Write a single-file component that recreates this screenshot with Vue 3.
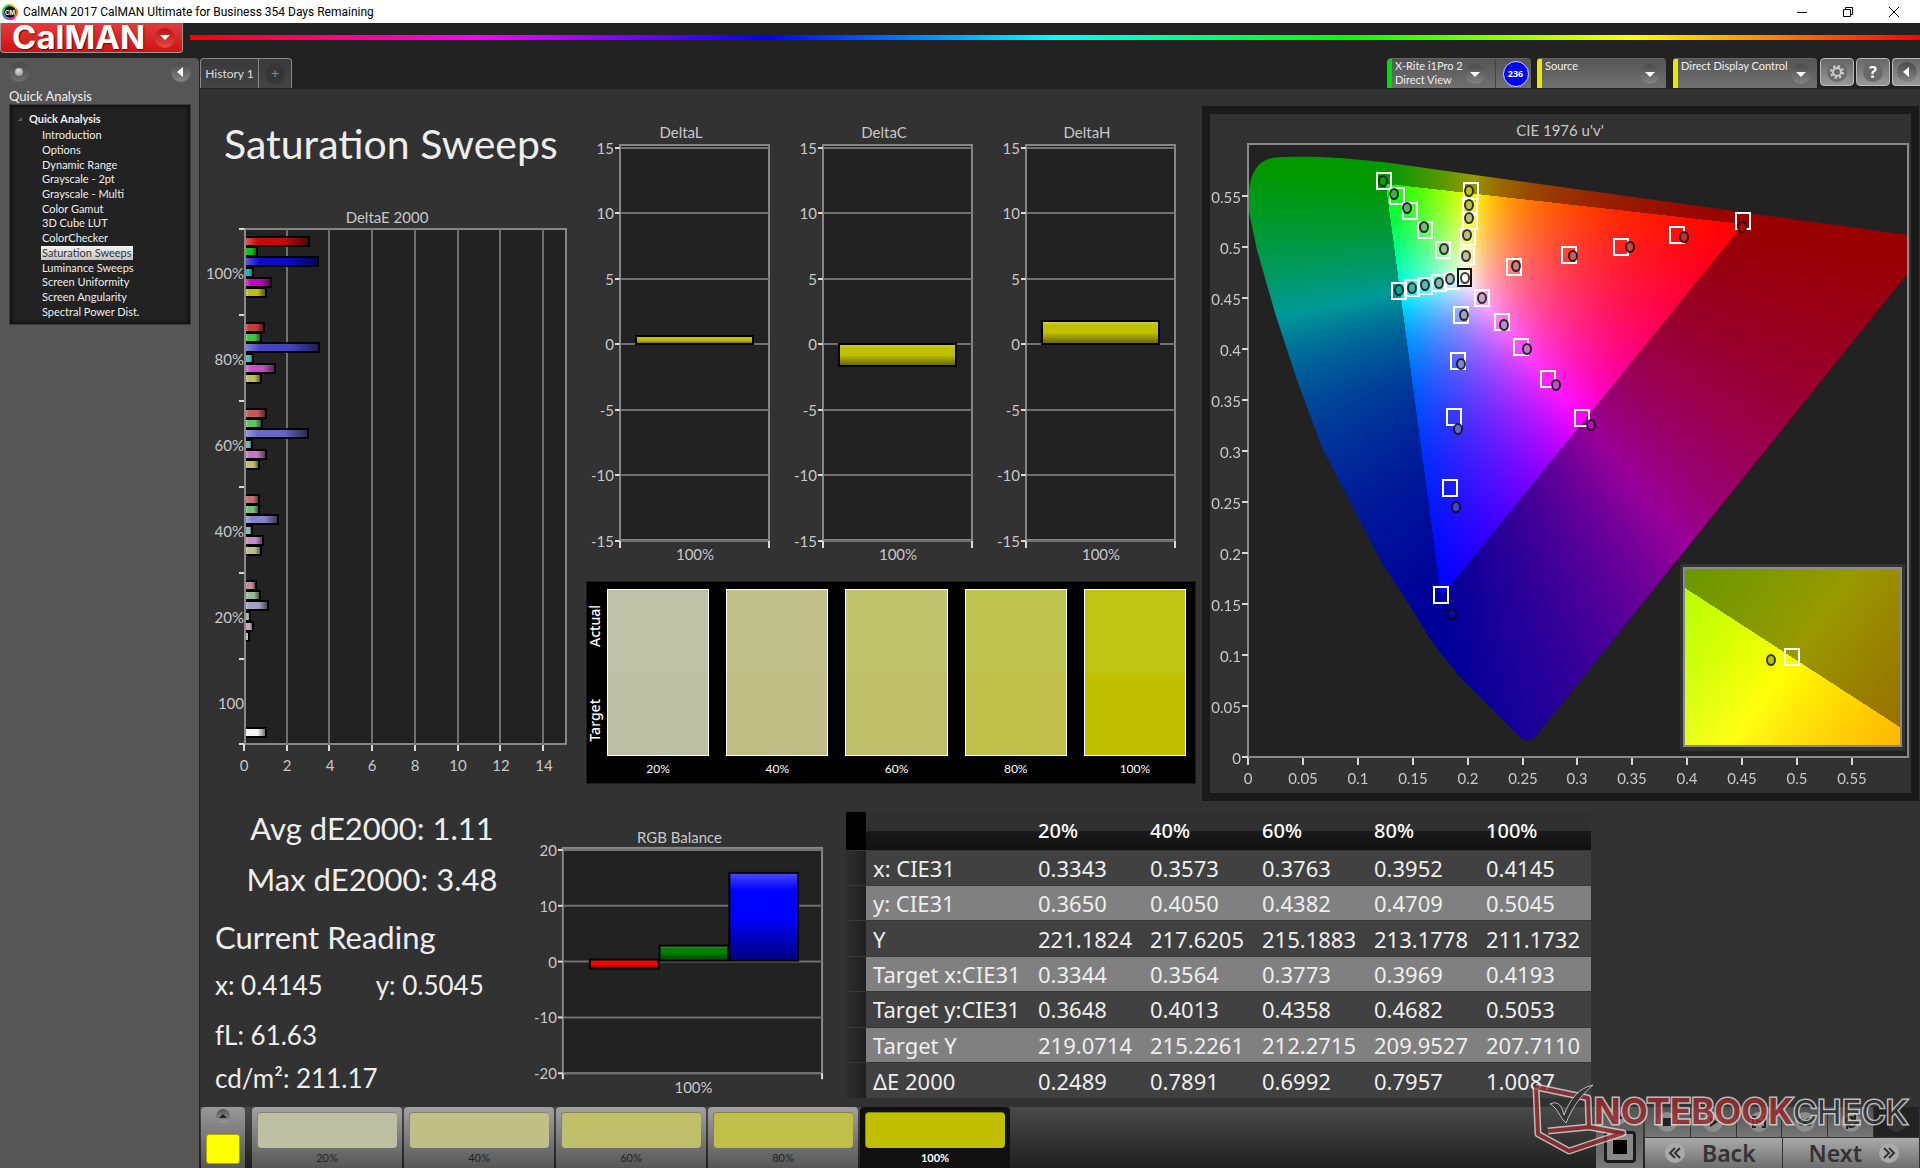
<script setup>
import { onMounted, ref } from 'vue'

const steps = [
  'Introduction', 'Options', 'Dynamic Range', 'Grayscale - 2pt', 'Grayscale - Multi',
  'Color Gamut', '3D Cube LUT', 'ColorChecker', 'Saturation Sweeps', 'Luminance Sweeps',
  'Screen Uniformity', 'Screen Angularity', 'Spectral Power Dist.',
]

/* DeltaE 2000 per saturation level: red, green, blue, cyan, magenta, yellow */
const deltaE = [
  { label: '100%', values: [64, 12, 73, 8, 26, 21], colors: ['#c80a0a', '#0fc00f', '#0a0ac8', '#10bcbc', '#bc08bc', '#bebe10'] },
  { label: '80%', values: [19, 16, 74, 8, 30, 16], colors: ['#c43c3c', '#42c442', '#4646c2', '#50bcbc', '#c450c4', '#bebe50'] },
  { label: '60%', values: [21, 17, 63, 7, 21, 14], colors: ['#c45858', '#60c460', '#6868c6', '#70bcbc', '#c478c4', '#bebe70'] },
  { label: '40%', values: [14, 14, 33, 7, 18, 16], colors: ['#c47070', '#78be78', '#8484c8', '#88bcbc', '#c48cc4', '#bebe84'] },
  { label: '20%', values: [11, 15, 23, 5, 8, 4], colors: ['#c49090', '#98be98', '#a0a0c4', '#a0bcbc', '#c0a8c4', '#c4c4aa'] },
  { label: '100', values: [0, 0, 0, 0, 0, 0, 21], colors: ['', '', '', '', '', '', '#f4f4f4'] },
]
const deTop = (g, i) => 28 + g * 86 + Math.round(i * 10.2)

const deltas = [
  { name: 'DeltaL', top: 212, height: 8 },
  { name: 'DeltaC', top: 220, height: 22 },
  { name: 'DeltaH', top: 197, height: 23 },
]
const deltaTicks = [15, 10, 5, 0, -5, -10, -15]
const deltaY = (v) => Math.round(220 - v * 13.1)

const rgbTicks = [20, 10, 0, -10, -20]
const rgbBars = [
  { x: 71, y: 131, h: 9, color: '#ff0000' },
  { x: 141, y: 117, h: 15, color: '#008000' },
  { x: 211, y: 44, h: 88, color: '#0000ff' },
]

const patches = [
  { label: '20%', actual: '#c0c0a6', target: '#bfbfa4' },
  { label: '40%', actual: '#c1c18a', target: '#c0c086' },
  { label: '60%', actual: '#c0c46c', target: '#c0bf6a' },
  { label: '80%', actual: '#bfc44e', target: '#bfc04a' },
  { label: '100%', actual: '#c0c414', target: '#c0c000' },
]

const rows = [
  ['x: CIE31', '0.3343', '0.3573', '0.3763', '0.3952', '0.4145'],
  ['y: CIE31', '0.3650', '0.4050', '0.4382', '0.4709', '0.5045'],
  ['Y', '221.1824', '217.6205', '215.1883', '213.1778', '211.1732'],
  ['Target x:CIE31', '0.3344', '0.3564', '0.3773', '0.3969', '0.4193'],
  ['Target y:CIE31', '0.3648', '0.4013', '0.4358', '0.4682', '0.5053'],
  ['Target Y', '219.0714', '215.2261', '212.2715', '209.9527', '207.7110'],
  ['ΔE 2000', '0.2489', '0.7891', '0.6992', '0.7957', '1.0087'],
]

/* CIE 1976 diagram: plot box is 660 x 613, drawn at (38, 30) in its SVG */
const cieX = [0, 0.05, 0.1, 0.15, 0.2, 0.25, 0.3, 0.35, 0.4, 0.45, 0.5, 0.55]
const PX = 38
const PY = 643
const SU = 1098
const SV = 1020
const ux = (u) => Math.round(PX + u * SU)
const vy = (v) => Math.round(PY - v * SV)

/* target x, target y, measured x, measured y, fill */
const marks = [
  [174, 67, 173, 67, '#00a800'], [187, 82, 184, 80, '#40b040'], [200, 97, 197, 94, '#60b460'], [215, 116, 214, 113, '#78bc78'], [233, 136, 234, 135, '#98bc98'],
  [261, 77, 259, 77, '#bebe10'], [260, 93, 259, 91, '#bebe50'], [260, 107, 259, 104, '#bebe70'], [258, 123, 257, 121, '#bebe84'], [257, 142, 256, 142, '#c0c0a6'],
  [189, 177, 189, 176, '#00a8a8'], [202, 174, 202, 174, '#40b0b0'], [215, 172, 215, 171, '#68b4b4'], [229, 169, 229, 169, '#84b8b8'], [242, 167, 240, 165, '#a0bcbc'],
  [304, 153, 306, 152, '#c08080'], [359, 141, 363, 142, '#c06060'], [411, 133, 420, 133, '#c04848'], [467, 121, 474, 123, '#c03030'], [533, 107, 532, 113, '#c00000'],
  [272, 184, 272, 184, '#c0a8c4'], [292, 208, 294, 211, '#c08cc4'], [311, 233, 317, 235, '#c078c4'], [338, 265, 346, 271, '#c050c4'], [372, 304, 381, 311, '#bc08bc'],
  [251, 201, 254, 201, '#a0a0c4'], [248, 247, 251, 250, '#8484c8'], [244, 303, 248, 315, '#6868c6'], [240, 374, 246, 393, '#4646c2'], [231, 481, 242, 500, '#0a0aa8'],
]

const locus = ref(null)
const detail = ref(null)

/* xy chromaticity -> linear RGB, brightest channel at full; dimmed outside the gamut */
function shade(x, y) {
  const X = x / y
  const Z = (1 - x - y) / y
  const lin = [
    3.2406 * X - 1.5372 - 0.4986 * Z,
    -0.9689 * X + 1.8758 + 0.0415 * Z,
    0.0557 * X - 0.204 + 1.057 * Z,
  ]
  const dim = Math.min(...lin) < 0 ? 0.6 : 1
  const max = Math.max(...lin)
  return lin.map((c) => (255 * dim * Math.max(c, 0)) / max)
}

function paint(canvas, toXY) {
  const { width, height } = canvas
  const ctx = canvas.getContext('2d')
  const img = ctx.createImageData(width, height)
  for (let j = 0; j < height; j++) {
    for (let i = 0; i < width; i++) {
      const [x, y] = toXY(i, j)
      const c = shade(x, y)
      const k = 4 * (j * width + i)
      img.data[k] = c[0]
      img.data[k + 1] = c[1]
      img.data[k + 2] = c[2]
      img.data[k + 3] = 255
    }
  }
  ctx.putImageData(img, 0, 0)
}

onMounted(() => {
  paint(locus.value, (i, j) => {
    const u = i / SU
    const v = Math.max((613 - j) / SV, 0.001)
    const d = 6 * u - 16 * v + 12
    return [(9 * u) / d, (4 * v) / d]
  })
  paint(detail.value, (i, j) => [0.3943 + (i / 216) * 0.05, 0.5303 - (j / 176) * 0.05])
})
</script>

<template>
  <div class="app">
    <header class="titlebar">
      <svg class="appicon" viewBox="0 0 16 16" aria-hidden="true">
        <path d="M8 1A7 7 0 0 1 14 5" stroke="#f3d21b" />
        <path d="M14 5A7 7 0 0 1 13 13" stroke="#f26a1b" />
        <path d="M13 13A7 7 0 0 1 6 15" stroke="#e01bd0" />
        <path d="M6 15A7 7 0 0 1 1 9" stroke="#3a5cf0" />
        <path d="M1 9A7 7 0 0 1 8 1" stroke="#25d35a" />
        <circle cx="8" cy="8" r="6" fill="#111" stroke="none" />
        <text x="8" y="11">CM</text>
      </svg>
      <span class="caption">CalMAN 2017 CalMAN Ultimate for Business 354 Days Remaining</span>
      <div class="winbtns">
        <button aria-label="Minimize"><svg viewBox="0 0 10 10"><path d="M0 5.5H10" /></svg></button>
        <button aria-label="Restore"><svg viewBox="0 0 10 10"><path d="M.5 2.5H7.5V9.5H.5ZM2.5 2.5V.5H9.5V7.5H7.5" /></svg></button>
        <button aria-label="Close"><svg viewBox="0 0 10 10"><path d="M0 0L10 10M10 0L0 10" /></svg></button>
      </div>
    </header>

    <div class="brandrow">
      <button class="brand">CalMAN<span class="knob red"><i class="down"></i></span></button>
      <div class="rainbow"></div>
    </div>

    <div class="body">
      <aside class="side">
        <div class="sidetop">
          <span class="knob flat"><i class="dot"></i></span>
          <button class="knob" aria-label="Collapse"><i class="left"></i></button>
        </div>
        <h2>Quick Analysis</h2>
        <nav class="tree">
          <div class="root"><i class="fold"></i>Quick Analysis</div>
          <ul>
            <li v-for="s in steps" :key="s">
              <a href="#" :class="{ on: s === 'Saturation Sweeps' }">{{ s }}</a>
            </li>
          </ul>
        </nav>
      </aside>

      <main class="main">
        <div class="toolbar">
          <div class="tabs">
            <button class="tab">History 1</button>
            <button class="tab add" aria-label="Add history"><span>+</span></button>
          </div>
          <div class="devices">
            <div class="device meter">
              <button class="devbtn green"><span>X-Rite i1Pro 2<br />Direct View</span><span class="knob"><i class="down"></i></span></button>
              <div class="count"><span>236</span></div>
            </div>
            <button class="device devbtn source"><span>Source</span><span class="knob"><i class="down"></i></span></button>
            <button class="device devbtn display"><span>Direct Display Control</span><span class="knob"><i class="down"></i></span></button>
            <button class="sq" aria-label="Settings">
              <svg viewBox="0 0 22 22">
                <circle cx="11" cy="11" r="10" class="disc" />
                <circle cx="11" cy="11" r="4" fill="none" stroke="#ccc" stroke-width="2" />
                <circle cx="11" cy="11" r="6" fill="none" stroke="#ccc" stroke-width="2" stroke-dasharray="2.4 2.3" />
              </svg>
            </button>
            <button class="sq help" aria-label="Help"><span>?</span></button>
            <button class="sq cut" aria-label="Expand"><span class="knob"><i class="left"></i></span></button>
          </div>
        </div>

        <div class="page">
          <div class="upper">
            <section class="sweeps">
              <h1>Saturation Sweeps</h1>
              <svg viewBox="0 0 380 566" class="chart">
                <defs>
                  <linearGradient id="glossH">
                    <stop offset="0" stop-color="#fff" stop-opacity=".35" />
                    <stop offset=".2" stop-color="#fff" stop-opacity="0" />
                    <stop offset=".6" stop-color="#000" stop-opacity="0" />
                    <stop offset="1" stop-color="#000" stop-opacity=".6" />
                  </linearGradient>
                </defs>
                <text x="187" y="14" class="mid">DeltaE 2000</text>
                <rect x="45" y="20" width="321" height="515" class="plot" />
                <path v-for="n in 7" :key="n" :d="`M${44 + Math.round(n * 42.7)} 20V541`" class="grid" />
                <path v-for="n in 7" :key="'t' + n" :d="`M39 ${20 + Math.round((n - 1) * 85.9)}h6`" class="tick" />
                <path v-for="n in 8" :key="'b' + n" :d="`M${44 + Math.round((n - 1) * 42.7)} 536v6`" class="tick" />
                <text v-for="n in 8" :key="'x' + n" :x="44 + Math.round((n - 1) * 42.8)" y="562" class="mid">{{ (n - 1) * 2 }}</text>
                <g v-for="(g, gi) in deltaE" :key="gi">
                  <text x="44" :y="70 + gi * 86" class="end">{{ g.label }}</text>
                  <template v-for="(w, i) in g.values" :key="i">
                    <g v-if="w">
                      <rect x="45" :y="deTop(gi, i)" :width="w" height="9" :fill="g.colors[i]" />
                      <rect x="45" :y="deTop(gi, i)" :width="w" height="9" fill="url(#glossH)" stroke="#000" stroke-width="2" />
                    </g>
                  </template>
                </g>
                <path d="M45 20V535" class="frame" />
              </svg>
            </section>

            <section class="middle">
              <div class="deltas">
                <svg v-for="d in deltas" :key="d.name" viewBox="0 0 203 440" class="chart">
                  <defs>
                    <linearGradient id="glossV" x2="0" y2="1">
                      <stop offset="0" stop-color="#fff" stop-opacity=".3" />
                      <stop offset=".2" stop-color="#fff" stop-opacity="0" />
                      <stop offset=".5" stop-color="#000" stop-opacity="0" />
                      <stop offset="1" stop-color="#000" stop-opacity=".5" />
                    </linearGradient>
                  </defs>
                  <text x="101" y="14" class="mid">{{ d.name }}</text>
                  <rect x="40" y="21" width="149" height="395" class="plot" />
                  <g v-for="t in deltaTicks" :key="t">
                    <path :d="`M40 ${deltaY(t)}H189`" class="grid" />
                    <path :d="`M35 ${deltaY(t)}h5`" class="tick" />
                    <text x="34" :y="deltaY(t) + 6" class="end">{{ t }}</text>
                  </g>
                  <path d="M40 417v7M189 417v7" class="tick" />
                  <rect x="56" :y="d.top" width="117" :height="d.height" fill="#c0c000" />
                  <rect x="56" :y="d.top" width="117" :height="d.height" fill="url(#glossV)" stroke="#000" stroke-width="2" />
                  <text x="115" y="436" class="mid">100%</text>
                </svg>
              </div>
              <div class="compare">
                <div class="vert"><span>Actual</span><span>Target</span></div>
                <figure v-for="p in patches" :key="p.label">
                  <div class="patch">
                    <div :style="{ background: p.actual }"></div>
                    <div :style="{ background: p.target }"></div>
                  </div>
                  <figcaption>{{ p.label }}</figcaption>
                </figure>
              </div>
            </section>

            <section class="cie">
              <svg viewBox="0 0 701 679" class="chart">
                <text x="350" y="22" class="mid">CIE 1976 u'v'</text>
                <rect x="38" y="30" width="660" height="613" class="plot" />
                <foreignObject x="38" y="30" width="660" height="613">
                  <canvas ref="locus" class="locus" width="660" height="613"></canvas>
                </foreignObject>
                <rect x="38" y="30" width="660" height="613" class="frame" />
                <g v-for="t in cieX" :key="t">
                  <path :d="`M32 ${vy(t)}h6M${ux(t)} 644v7`" class="tick" />
                  <text x="31" :y="vy(t) + 7" class="end">{{ t }}</text>
                  <text :x="ux(t)" y="670" class="mid">{{ t }}</text>
                </g>
                <g v-for="(m, i) in marks" :key="'s' + i">
                  <rect :x="m[0] - 7" :y="m[1] - 8" width="14" height="16" class="target" />
                </g>
                <rect x="248" y="155" width="13" height="17" class="white" />
                <g v-for="(m, i) in marks" :key="'c' + i">
                  <ellipse :cx="m[2]" :cy="m[3]" rx="4" ry="5" :fill="m[4]" class="dotm" />
                </g>
                <ellipse cx="255" cy="164" rx="4" ry="5" fill="#fff" class="dotm" />
                <rect x="470" y="450" width="225" height="187" fill="#333" />
                <foreignObject x="474" y="455" width="216" height="176">
                  <canvas ref="detail" width="216" height="176"></canvas>
                </foreignObject>
                <rect x="474" y="454" width="217" height="178" class="frame" />
                <rect x="575" y="535" width="14" height="16" class="target" />
                <ellipse cx="561" cy="546" rx="4" ry="5" fill="#bebe10" class="dotm" />
              </svg>
            </section>
          </div>

          <div class="lower">
            <section class="stats">
              <p class="big c">Avg dE2000: 1.11</p>
              <p class="big c">Max dE2000: 3.48</p>
              <p class="big head">Current Reading</p>
              <p class="xy"><span>x: 0.4145</span><span>y: 0.5045</span></p>
              <p class="fl">fL: 61.63</p>
              <p class="cd">cd/m²: 211.17</p>
            </section>
            <section class="rgb">
              <svg viewBox="0 0 328 272" class="chart">
                <text x="161" y="14" class="mid">RGB Balance</text>
                <rect x="44" y="19" width="260" height="226" class="plot" />
                <g v-for="t in rgbTicks" :key="t">
                  <path :d="`M44 ${Math.round(133 - t * 5.6)}H304`" class="grid" />
                  <path :d="`M39 ${Math.round(133 - t * 5.6)}h5`" class="tick" />
                  <text x="38" :y="Math.round(133 - t * 5.6) + 6" class="end">{{ t }}</text>
                </g>
                <path d="M44 245v6M304 245v6" class="tick" />
                <g v-for="b in rgbBars" :key="b.x">
                  <rect :x="b.x" :y="b.y" width="69" :height="b.h" :fill="b.color" />
                  <rect :x="b.x" :y="b.y" width="69" :height="b.h" fill="url(#glossV)" stroke="#000" stroke-width="2" />
                </g>
                <text x="175" y="265" class="mid">100%</text>
              </svg>
            </section>
            <section class="data">
              <table>
                <thead>
                  <tr><th class="grip"></th><th></th><th v-for="p in patches" :key="p.label" scope="col">{{ p.label }}</th></tr>
                </thead>
                <tbody>
                  <tr v-for="r in rows" :key="r[0]">
                    <td class="grip"></td>
                    <td v-for="(c, i) in r" :key="i">{{ c }}</td>
                  </tr>
                </tbody>
              </table>
            </section>
          </div>
        </div>

        <footer class="dock">
          <button class="current" aria-label="Current color"><span class="knob tiny"><i class="up"></i></span><span class="chip"></span></button>
          <button v-for="p in patches" :key="p.label" class="level" :class="{ on: p.label === '100%' }">
            <span class="bar" :style="{ background: p.target }"></span>{{ p.label }}
          </button>
          <div class="controls">
            <button class="view" aria-label="View"><span class="knob tiny"><i class="up"></i></span><span class="screen"></span></button>
            <div class="nav">
              <div class="mini">
                <button aria-label="Stop"><svg viewBox="0 0 20 20"><circle cx="10" cy="10" r="10" /><path d="M6 6h8v8H6z" /></svg></button>
                <button aria-label="Play"><svg viewBox="0 0 20 20"><circle cx="10" cy="10" r="10" /><path d="M7 5l8 5-8 5z" /></svg></button>
                <button aria-label="Read series"><svg viewBox="0 0 20 20"><circle cx="10" cy="10" r="10" /><path d="M7 5H4v10h3M13 5h3v10h-3M8 8l4 2-4 2z" class="ln" /></svg></button>
                <button aria-label="Continuous"><svg viewBox="0 0 20 20"><circle cx="10" cy="10" r="10" /><path d="M10 10C7 5 3 7 4 10s4 4 6 0 6-3 6 0-3 5-6 0" class="ln" /></svg></button>
                <button aria-label="Refresh"><svg viewBox="0 0 20 20"><circle cx="10" cy="10" r="10" /><path d="M5 10a5 5 0 0 1 9-3M15 10a5 5 0 0 1-9 3M14 3v4h-4M6 17v-4h4" class="ln" /></svg></button>
                <button class="off" aria-label="More"><svg viewBox="0 0 20 20"><circle cx="10" cy="10" r="10" /></svg></button>
              </div>
              <div class="steps">
                <button>
                  <svg class="chev" viewBox="0 0 20 20"><circle cx="10" cy="10" r="10" /><path d="M10 5L5 10L10 15M15 5L10 10L15 15" /></svg>Back
                </button>
                <button class="next">
                  Next<svg class="chev" viewBox="0 0 20 20"><circle cx="10" cy="10" r="10" /><path d="M5 5L10 10L5 15M10 5L15 10L10 15" /></svg>
                </button>
              </div>
            </div>
            <svg class="mark" viewBox="0 0 388 76" role="img" aria-label="Notebookcheck">
              <path class="lap" d="M5 7L57 18L58 47L17 51M5 7L7 54L38 71L92 53L58 47" />
              <path class="lapred" d="M5 7L57 18L58 47L17 51M5 7L7 54L38 71L92 53L58 47" />
              <path class="check" d="M19 24C28 20 31 27 33 35C39 19 48 8 62 5C50 15 41 28 35 43C29 38 27 28 19 24Z" />
              <text x="63" y="44" class="nb">NOTEBOOK</text>
              <text x="262" y="44" class="ck">CHECK</text>
            </svg>
          </div>
        </footer>
      </main>
    </div>
  </div>
</template>

<style>
body { background: #222; }
</style>

<style scoped>
* { box-sizing: border-box; }
.app { font-family: Lato, "Noto Sans", sans-serif; color: #eee; background: #222; min-height: 100vh; display: flex; flex-direction: column; overflow: hidden; }
button { font: inherit; color: inherit; border: 0; padding: 0; margin: 0; background: none; }
h1, h2, p, ul, figure { margin: 0; padding: 0; font-weight: 400; }

.titlebar { height: 23px; background: #fff; color: #000; display: flex; align-items: center; font: 12px/22px Roboto, "Noto Sans", sans-serif; padding: 0 3px 0 2px; }
.appicon { width: 16px; height: 16px; margin-right: 5px; fill: none; stroke-width: 2; }
.appicon text { fill: #fff; font: 700 6px Inter, sans-serif; text-anchor: middle; }
.caption { flex: 1; white-space: nowrap; }
.winbtns { display: flex; }
.winbtns button { width: 46px; height: 22px; display: grid; place-items: center; }
.winbtns svg { width: 10px; height: 10px; fill: none; stroke: #000; }

.brandrow { height: 35px; display: flex; align-items: flex-start; }
.brand { width: 183px; height: 30px; flex: none; display: flex; align-items: center; justify-content: space-between; padding: 0 7px 0 11px; background: linear-gradient(#e23c3c, #d01212); border: solid #999; border-width: 0 1px 1px; border-radius: 0 0 4px 4px; color: #fff; font: 700 33px/29px Inter, sans-serif; text-shadow: 1px 1px 1px #700; }
.rainbow { flex: 1; height: 5px; margin: 12px 0 0 7px; background: linear-gradient(90deg, red, #f0f, #00f, #0ff, #0f0, #ff0, red); }

.knob { width: 20px; height: 20px; border-radius: 50%; display: grid; place-items: center; background: linear-gradient(#4a4a4a, #848484); flex: none; }
.knob.flat { background: linear-gradient(#484848, #6e6e6e); }
.knob.red { background: linear-gradient(#b81414, #e84848); }
.knob.tiny { width: 14px; height: 14px; background: linear-gradient(#555, #999); }
.down { border: 5px solid transparent; border-top-color: #fff; border-bottom: 0; }
.left { border: 5px solid transparent; border-right: 6px solid #fff; border-left: 0; margin-right: 2px; }
.up { border: 4px solid transparent; border-bottom-color: #222; border-top: 0; }
.dot { width: 8px; height: 8px; border-radius: 50%; background: radial-gradient(circle at 40% 30%, #ddd, #888); }

.body { flex: 1; display: grid; grid-template-columns: 200px 1fr; }
.side { background: #565656; border-radius: 0 5px 0 0; border-right: 1px solid #222; }
.sidetop { display: flex; justify-content: space-between; padding: 4px 8px 0 9px; }
.side h2 { font-size: 13px; line-height: 16px; margin: 6px 0 0 9px; }
.tree { margin: 0 8px 0 9px; height: 221px; background: #222; border: 1px solid #3c3c3c; box-shadow: inset 0 0 5px #000; font-size: 11px; line-height: 14px; padding: 7px 0 5px 32px; display: flex; flex-direction: column; }
.root { font-weight: 700; margin-left: -13px; position: relative; }
.fold { position: absolute; left: -11px; top: 5px; border: solid transparent; border-width: 0 0 4px 4px; border-bottom-color: #666; }
.tree ul { list-style: none; flex: 1; display: flex; flex-direction: column; margin-top: 2px; }
.tree li { flex: 1; display: flex; align-items: center; }
.tree a { color: inherit; text-decoration: none; padding: 0 1px; margin-left: -1px; white-space: nowrap; }
.tree a.on { background: linear-gradient(#f4f4f4, #c4c4c4); color: #333; }

.main { min-width: 0; display: flex; flex-direction: column; }
.toolbar { height: 30px; display: flex; justify-content: space-between; }
.tabs { display: flex; }
.tab { height: 30px; width: 59px; background: linear-gradient(#3a3a3a, #444); border: 1px solid #888; border-bottom: 0; border-radius: 4px 0 0 0; font-size: 12px; white-space: nowrap; color: #ddd; }
.tab.add { border-left: 0; border-radius: 0 4px 0 0; width: 33px; }
.add span { display: block; width: 20px; height: 20px; margin: auto; line-height: 18px; border-radius: 50%; background: #363636; color: #888; font-size: 14px; }
.devices { display: flex; align-items: flex-start; }
.device { background: linear-gradient(#555, #707070); border-radius: 4px 4px 0 0; height: 30px; border-top: 1px solid #666; overflow: hidden; }
.devbtn { display: flex; align-items: flex-start; justify-content: space-between; text-align: left; font-size: 11px; line-height: 14px; padding: 0 6px 0 3px; border-left: 5px solid #e8e800; white-space: nowrap; height: 30px; }
.devbtn .knob { margin-top: 5px; }
.devbtn.green { border-left-color: #0d0; width: 109px; padding-right: 10px; border-right: 1px solid #444; }
.meter { display: flex; width: 144px; margin-right: 6px; }
.count { flex: 1; display: grid; place-items: center; padding-left: 4px; }
.count span { width: 26px; height: 26px; border-radius: 50%; background: #00f; border: 1px solid #ccf; font: 700 9px/24px "Open Sans", sans-serif; text-align: center; color: #fff; }
.source { width: 129px; margin-right: 7px; }
.display { width: 144px; margin-right: 3px; }
.display .knob { margin-left: -6px; }
.sq { width: 34px; height: 28px; margin-right: 2px; border: 1px solid #bbb; border-radius: 4px; background: linear-gradient(#666, #999); display: grid; place-items: center; color: #fff; }
.sq svg { width: 22px; height: 22px; }
.disc { fill: #6a6a6a; }
.help span { width: 20px; height: 20px; border-radius: 50%; background: #6a6a6a; font: 700 16px/20px "Open Sans", sans-serif; }
.cut { width: 28px; margin-right: 0; border-right: 0; border-radius: 4px 0 0 4px; }

.page { flex: 1; background: #323232; border-top: 1px solid #222; }
.upper { display: grid; grid-template-columns: 380fr 622fr 718fr; align-items: start; }
.sweeps h1 { font-size: 41px; line-height: 48px; padding: 31px 0 41px 24px; white-space: nowrap; }
.chart { display: block; width: 100%; height: auto; overflow: visible; font-size: 15px; fill: #c8c8c8; }
.mid { text-anchor: middle; }
.end { text-anchor: end; }
.plot { fill: #222; stroke: #868686; stroke-width: 2; }
.frame { fill: none; stroke: #8a8a8a; stroke-width: 2; }
.grid { stroke: #707070; stroke-width: 2; }
.tick { stroke: #d8d8d8; stroke-width: 2; }
.middle { padding-top: 35px; }
.deltas { display: grid; grid-template-columns: 203fr 203fr 203fr; padding-right: 13px; }
.compare { margin: 17px 6px 0; height: 203px; background: #000; border: 1px solid #1c1c1c; display: flex; gap: 17px; padding: 7px 9px 0 0; }
.vert { width: 16px; margin-right: -13px; height: 167px; padding: 16px 0 14px; display: flex; flex-direction: column; justify-content: space-between; font: 500 14px/16px "Noto Sans", sans-serif; color: #fff; }
.vert span { writing-mode: vertical-rl; transform: rotate(180deg); }
.compare figure { flex: 1; text-align: center; font-size: 12px; color: #fff; }
.patch { height: 167px; border: 1px solid #fff; display: flex; flex-direction: column; }
.patch div { flex: 1; }
.compare figcaption { line-height: 26px; }

.cie { background: #323232; border: 8px solid #1a1a1a; margin: 17px 1px 0 0; }
.locus { display: block; clip-path: path("M0 63C0 30 8 13 34 13C70 12 90 13 135 18L227 31L494 68L660 91V129L287 593Q279 600 272 593L218 539Q200 520 181 493Q155 450 135 421L75 306L50 239L27 169L9 106Z"); }
.target { fill: none; stroke: #fff; stroke-width: 2; }
.white { fill: none; stroke: #111; stroke-width: 2; }
.dotm { stroke: rgba(10, 10, 10, .8); stroke-width: 2; }

.lower { display: grid; grid-template-columns: 320fr 328fr 742fr 330fr; align-items: start; }
.stats { padding: 2px 0 0 15px; font-size: 26px; line-height: 40px; white-space: nowrap; }
.stats .big { font-size: 31px; line-height: 51px; }
.stats .c { text-align: center; padding-left: 10px; }
.stats .head { margin-top: 7px; }
.xy { display: flex; gap: 53px; margin-top: 2px; }
.fl { margin-top: 10px; }
.cd { margin-top: 3px; }
.rgb { padding-top: 28px; }
.data { padding-top: 11px; }
table { width: 100%; height: 286px; border-collapse: collapse; table-layout: fixed; font: 22px/28px "Noto Sans", sans-serif; color: #eee; }
th, td { padding: 0 0 0 7px; height: 35px; text-align: left; white-space: nowrap; }
th { height: 38px; font-size: 20px; font-weight: 500; color: #fff; background: linear-gradient(#303030 50%, #1a1a1a 50%, #111); width: 112px; }
th:nth-child(2) { width: 165px; }
tbody tr { background: #414141; border-top: 1px solid #383838; }
tbody tr:nth-child(even) { background: #808080; }
.grip { width: 20px; padding: 0; background: linear-gradient(90deg, #2e2e2e, #202020); }
th.grip { background: #000; width: 20px; }

.dock { height: 61px; background: linear-gradient(#4a4a4a, #202020); display: flex; padding-left: 1px; color: #222; }
.current { width: 44px; margin-right: 7px; background: linear-gradient(#989898, #585858); border-radius: 4px 4px 0 0; display: flex; flex-direction: column; align-items: center; padding-top: 2px; }
.chip { width: 34px; height: 30px; margin-top: 11px; background: #ff0; border: 1px solid #aa0; border-radius: 3px; }
.level { width: 150px; margin-right: 2px; background: linear-gradient(#a2a2a2, #565656); border-radius: 4px 4px 0 0; display: flex; flex-direction: column; padding: 5px 5px 0; font-size: 11px; line-height: 20px; text-align: center; }
.bar { height: 36px; border-radius: 4px; border: solid rgba(0, 0, 0, .3); border-width: 1px 0 0 1px; }
.level.on { background: #111; color: #fff; font-weight: 700; }
.controls { margin-left: auto; display: flex; position: relative; }
.view { width: 47px; margin-right: 2px; background: linear-gradient(#555, #777); border-radius: 4px 4px 0 0; display: flex; flex-direction: column; align-items: center; padding-top: 3px; }
.screen { width: 32px; height: 32px; margin-top: 7px; border: 3px solid #1c1c1c; border-radius: 4px; background: linear-gradient(#000, #000) center / 14px 14px no-repeat, #888; }
.nav { width: 275px; display: flex; flex-direction: column; }
.mini { display: flex; height: 30px; }
.mini button { flex: 1; display: grid; place-items: center; background: linear-gradient(#505050, #777); border-right: 1px solid #333; }
.mini svg { width: 20px; height: 20px; fill: #222; }
.mini circle { fill: #8c8c8c; }
.mini .ln { fill: none; stroke: #222; stroke-width: 2; }
.mini .off { background: #222; }
.mini .off circle { fill: #333; }
.steps { display: flex; flex: 1; margin-top: 1px; font: 600 23px/28px "Noto Sans", sans-serif; color: #333; }
.steps button { flex: 1; display: flex; align-items: center; gap: 17px; padding: 0 20px; background: linear-gradient(#aaa, #6e6e6e); border-right: 1px solid #333; }
.steps .next { justify-content: flex-end; }
.chev { width: 20px; height: 20px; fill: none; stroke: #333; stroke-width: 2; }
.chev circle { fill: #aaa; stroke: none; }
.mark { position: absolute; width: 388px; height: 76px; right: 1px; bottom: 12px; opacity: .8; pointer-events: none; }
.lap { fill: none; stroke: #ddd; stroke-width: 7; stroke-linejoin: round; }
.lapred { fill: none; stroke: #9c2c2f; stroke-width: 4; stroke-linejoin: round; }
.check { fill: #333; stroke: #ddd; }
.nb, .ck { font: 700 35px/36px Inter, sans-serif; fill: #9c2c2f; stroke: #ddd; stroke-width: 3; paint-order: stroke; }
.ck { font-size: 33px; font-weight: 400; fill: #333; }
</style>
